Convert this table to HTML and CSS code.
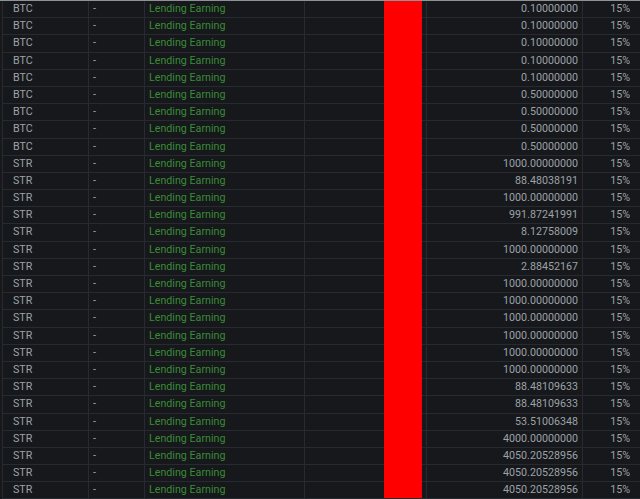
FILE: index.html
```html
<!DOCTYPE html>
<html lang="en">

<head>
    <meta charset="utf-8">
    <meta name="viewport" content="width=device-width, initial-scale=1.0">
    <title>Lending history</title>
    <link rel="stylesheet" href="styles.css">
</head>

<body>

    <section class="historik">
        <div class="rows"></div>
        <div class="redacted"></div>
    </section>

    <template>
        <div class="cell coin"></div>
        <div class="cell dash">-</div>
        <div class="cell type">Lending Earning</div>
        <div class="cell blank"></div>
        <div class="cell amount"></div>
        <div class="cell fee">15%</div>
    </template>

    <script>
        const poster = [
            ["BTC", "0.10000000"], ["BTC", "0.10000000"], ["BTC", "0.10000000"],
            ["BTC", "0.10000000"], ["BTC", "0.10000000"], ["BTC", "0.50000000"],
            ["BTC", "0.50000000"], ["BTC", "0.50000000"], ["BTC", "0.50000000"],
            ["STR", "1000.00000000"], ["STR", "88.48038191"], ["STR", "1000.00000000"],
            ["STR", "991.87241991"], ["STR", "8.12758009"], ["STR", "1000.00000000"],
            ["STR", "2.88452167"], ["STR", "1000.00000000"], ["STR", "1000.00000000"],
            ["STR", "1000.00000000"], ["STR", "1000.00000000"], ["STR", "1000.00000000"],
            ["STR", "1000.00000000"], ["STR", "88.48109633"], ["STR", "88.48109633"],
            ["STR", "53.51006348"], ["STR", "4000.00000000"], ["STR", "4050.20528956"],
            ["STR", "4050.20528956"], ["STR", "4050.20528956"]
        ];

        const container = document.querySelector(".rows");
        const skabelon = document.querySelector("template");

        poster.forEach(post => {
            let klon = skabelon.cloneNode(true).content;
            klon.querySelector(".coin").textContent = post[0];
            klon.querySelector(".amount").textContent = post[1];
            container.appendChild(klon);
        });
    </script>
</body>

</html>
```

FILE: styles.css
```css
* {
    box-sizing: border-box;
}

body {
    margin: 0;
    background: #16181b;
    font-family: Roboto, "Liberation Sans", sans-serif;
    font-size: 10.7px;
    overflow: hidden;
}

.historik {
    position: relative;
    border-top: 1px solid #8e9296;
    padding-left: 2px;
}

.rows {
    display: grid;
    grid-template-columns: 85px 55px 159px 121px 155px 1fr;
    grid-auto-rows: 16.2px;
    gap: 1px;
    padding: 0 0 1px 1px;
    background: #272b2f;
}

.cell {
    background: #16181b;
    color: #9ca2a7;
    line-height: 15px;
    padding: 0 4px;
    white-space: nowrap;
}

.coin {
    padding-left: 10px;
}

.type {
    color: #3a8a38;
}

.amount,
.fee {
    text-align: right;
}

.fee {
    padding-right: 10px;
}

.redacted {
    position: absolute;
    left: 384px;
    top: 0;
    width: 38px;
    height: 497px;
    background: #ff0000;
}
```
